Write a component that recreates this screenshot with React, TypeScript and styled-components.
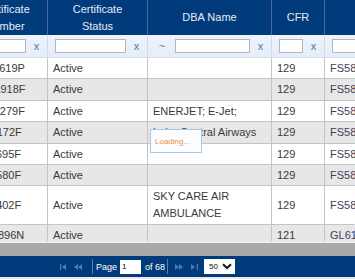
import React from "react";
import styled, { createGlobalStyle } from "styled-components";

const GlobalStyle = createGlobalStyle`
  html, body {
    margin: 0;
    padding: 0;
    background: #fff;
  }
  body {
    font-family: "Liberation Sans", Arial, sans-serif;
  }
`;

const COLS = [85, 100, 124, 53, 120];

const Frame = styled.div`
  position: relative;
  width: 355px;
  height: 279px;
  overflow: hidden;
  display: flex;
  flex-direction: column;
`;

const GridView = styled.div`
  flex: none;
  overflow: hidden;
`;

const Track = styled.div`
  margin-left: -37px;
  width: 482px;
`;

const HeaderRow = styled.div`
  display: flex;
  height: 35px;
  background: #023b7b;
`;

const HeadCell = styled.div<{ $w: number }>`
  flex: none;
  box-sizing: border-box;
  width: ${(p) => p.$w}px;
  border-right: 1px solid #4a6c9c;
  display: flex;
  align-items: center;
  justify-content: center;
  text-align: center;
  color: #e3ebf5;
  font-size: 11px;
  line-height: 17px;
`;

const FilterRow = styled.div`
  display: flex;
  height: 23px;
  box-sizing: border-box;
  background: linear-gradient(#eef4fc, #e3edf9);
  border-bottom: 1px solid #d3deeb;
`;

const FilterCell = styled.div<{ $w: number }>`
  flex: none;
  box-sizing: border-box;
  width: ${(p) => p.$w}px;
  border-right: 1px solid #cfdcec;
  display: flex;
  align-items: center;
  padding-left: 7px;
`;

const FilterInput = styled.input`
  flex: 1;
  min-width: 0;
  height: 14px;
  box-sizing: border-box;
  margin: 0;
  padding: 0 2px;
  border: 1px solid #b6b6b6;
  background: #fff;
  font-size: 9px;
  outline: none;
`;

const ClearMark = styled.span`
  flex: none;
  width: 21px;
  text-align: center;
  color: #5575a8;
  font-size: 11px;
  line-height: 14px;
`;

const Tilde = styled.span`
  flex: none;
  width: 14px;
  margin-right: 6px;
  text-align: center;
  color: #5575a8;
  font-size: 11px;
`;

const Body = styled.div`
  height: 183px;
  overflow: hidden;
`;

const Row = styled.div<{ $alt: boolean }>`
  display: flex;
  background: ${(p) => (p.$alt ? "#e7e7e7" : "#ffffff")};
  border-bottom: 1px solid #c4c4c4;
`;

const Cell = styled.div<{ $w: number; $ink?: string }>`
  flex: none;
  box-sizing: border-box;
  width: ${(p) => p.$w}px;
  border-right: 1px solid #c4c4c4;
  padding: 2px 5px 1.4px;
  display: flex;
  align-items: center;
  color: ${(p) => p.$ink || "#3a3a3a"};
  font-size: 11px;
  line-height: 17px;
  white-space: normal;
`;

const ScrollBar = styled.div`
  flex: none;
  height: 13px;
  border-top: 2px solid #ececec;
  background: #a9a9a9;
`;

const Pager = styled.div`
  flex: none;
  height: 21px;
  background: #023b7b;
  display: flex;
  align-items: center;
  padding-left: 60px;
  color: #ffffff;
  font-size: 9px;
`;

const BottomStrip = styled.div`
  flex: none;
  height: 2px;
  background: #e9e9e9;
`;

const NavButton = styled.span<{ $ml: number }>`
  display: flex;
  margin-left: ${(p) => p.$ml}px;
`;

const Separator = styled.span<{ $ml: number }>`
  width: 1px;
  height: 15px;
  margin-left: ${(p) => p.$ml}px;
  background: #5d7fae;
`;

const PagerLabel = styled.span<{ $ml: number }>`
  margin-left: ${(p) => p.$ml}px;
  line-height: 14px;
`;

const PageInput = styled.input`
  width: 21px;
  height: 14px;
  box-sizing: border-box;
  margin: 0 0 0 3px;
  padding: 0 2px;
  border: none;
  background: #fff;
  font-family: inherit;
  font-size: 8px;
  color: #000;
`;

const SizeSelect = styled.div`
  margin-left: 6px;
  width: 31px;
  height: 15px;
  box-sizing: border-box;
  background: #fff;
  display: flex;
  align-items: center;
  justify-content: space-between;
  padding: 0 3px 0 5px;
  color: #111;
  font-size: 8px;
`;

const LoadingBox = styled.div`
  position: absolute;
  left: 150px;
  top: 129px;
  width: 52px;
  height: 24px;
  box-sizing: border-box;
  background: #fcfdff;
  border: 1px solid #a3c5ee;
  display: flex;
  align-items: center;
  padding-left: 4px;
  color: #ee8a3e;
  font-size: 8px;
`;

const NAV = "#5878a8";

const FirstIcon = () => (
  <svg width="7" height="6" viewBox="0 0 7 6">
    <rect x="0" y="0" width="1.2" height="6" fill={NAV} />
    <path d="M6 0 L2 3 L6 6 Z" fill={NAV} />
  </svg>
);

const PrevIcon = () => (
  <svg width="8" height="6" viewBox="0 0 8 6">
    <path d="M4 0 L0 3 L4 6 Z M8 0 L4 3 L8 6 Z" fill={NAV} />
  </svg>
);

const NextIcon = () => (
  <svg width="8" height="6" viewBox="0 0 8 6">
    <path d="M0 0 L4 3 L0 6 Z M4 0 L8 3 L4 6 Z" fill={NAV} />
  </svg>
);

const LastIcon = () => (
  <svg width="7" height="6" viewBox="0 0 7 6">
    <path d="M0 0 L4 3 L0 6 Z" fill={NAV} />
    <rect x="5.8" y="0" width="1.2" height="6" fill={NAV} />
  </svg>
);

const Chevron = () => (
  <svg width="10" height="7" viewBox="0 0 10 7">
    <path d="M1 1.2 L5 5 L9 1.2" stroke="#1a1a1a" strokeWidth="2" fill="none" />
  </svg>
);

const headers = [
  <>Certificate<br />Number</>,
  <>Certificate<br />Status</>,
  <>DBA Name</>,
  <>CFR</>,
  <>Office</>,
];

const rows = [
  ["DQSA619P", "Active", "", "129", "FS58"],
  ["GOCA918F", "Active", "", "129", "FS58"],
  ["NOHA279F", "Active", "ENERJET; E-Jet;", "129", "FS58"],
  ["LKCA172F", "Active", "Lake Central Airways", "129", "FS58"],
  ["YXTA695F", "Active", "", "129", "FS58"],
  ["ZTEA580F", "Active", "", "129", "FS58"],
  ["K5SA402F", "Active", "SKY CARE AIR AMBULANCE", "129", "FS58"],
  ["CQ7A896N", "Active", "", "121", "GL61"],
];

export default function App() {
  return (
    <Frame>
      <GlobalStyle />
      <GridView>
        <Track>
          <HeaderRow>
            {headers.map((h, i) => (
              <HeadCell key={i} $w={COLS[i]}>
                <span>{h}</span>
              </HeadCell>
            ))}
          </HeaderRow>
          <FilterRow>
            {COLS.map((w, i) => (
              <FilterCell key={i} $w={w}>
                {i === 2 && <Tilde>~</Tilde>}
                <FilterInput type="text" />
                <ClearMark>x</ClearMark>
              </FilterCell>
            ))}
          </FilterRow>
          <Body>
            {rows.map((r, ri) => (
              <Row key={ri} $alt={ri % 2 === 1}>
                {r.map((v, ci) => (
                  <Cell key={ci} $w={COLS[ci]} $ink={ci === 4 ? "#463c5e" : undefined}>
                    {v}
                  </Cell>
                ))}
              </Row>
            ))}
          </Body>
        </Track>
      </GridView>
      <ScrollBar />
      <Pager>
        <NavButton $ml={0}><FirstIcon /></NavButton>
        <NavButton $ml={7}><PrevIcon /></NavButton>
        <Separator $ml={10} />
        <PagerLabel $ml={3}>Page</PagerLabel>
        <PageInput type="text" defaultValue="1" />
        <PagerLabel $ml={4}>of 68</PagerLabel>
        <Separator $ml={2} />
        <NavButton $ml={7}><NextIcon /></NavButton>
        <NavButton $ml={8}><LastIcon /></NavButton>
        <SizeSelect>
          <span>50</span>
          <Chevron />
        </SizeSelect>
      </Pager>
      <BottomStrip />
      <LoadingBox>Loading...</LoadingBox>
    </Frame>
  );
}
